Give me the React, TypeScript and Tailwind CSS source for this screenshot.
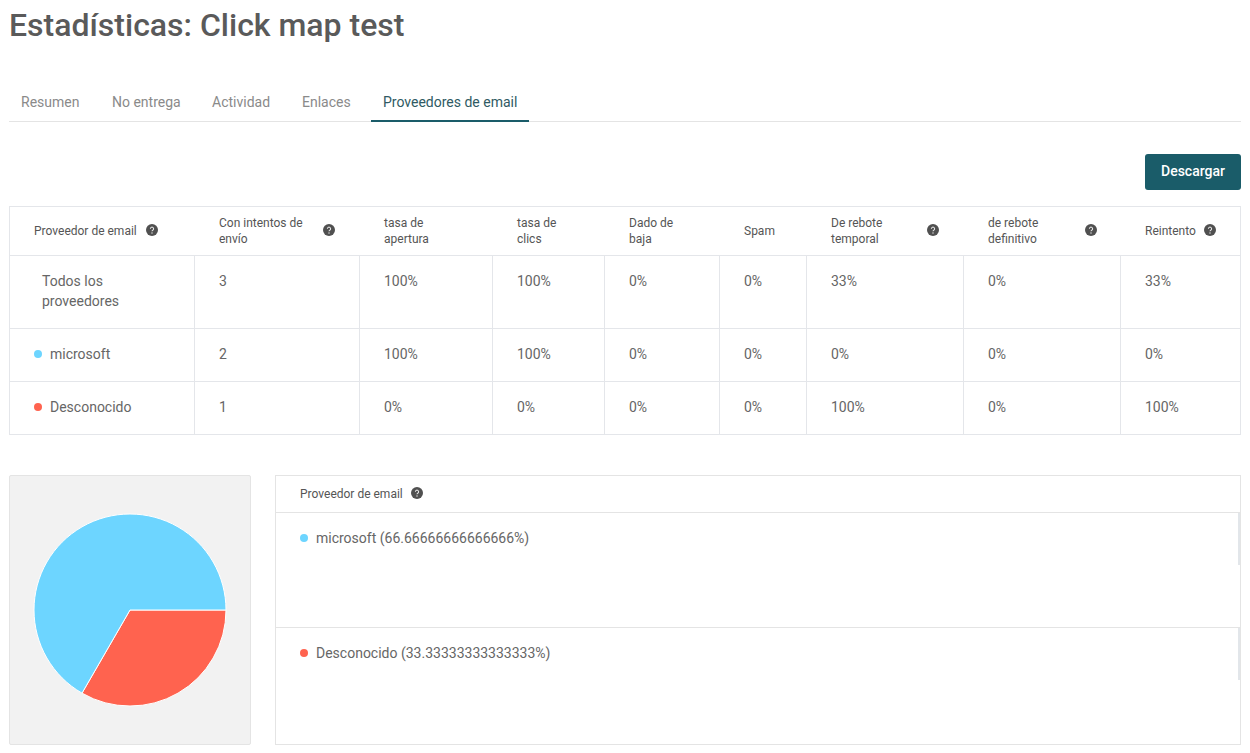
const BLUE = 'bg-[#6dd5ff]'
const RED = 'bg-[#ff634f]'

const TABS = [
  { label: 'Resumen', width: 'w-[91px]' },
  { label: 'No entrega', width: 'w-[100px]' },
  { label: 'Actividad', width: 'w-[90px]' },
  { label: 'Enlaces', width: 'w-[81px]' },
]

const COLUMNS = [
  { label: 'Proveedor de email', width: 'w-[185px]', help: true, textW: 'w-[112px]' },
  { label: 'Con intentos de envío', width: 'w-[165px]', help: true, textW: 'w-[104px]' },
  { label: 'tasa de apertura', width: 'w-[133px]', help: false, textW: 'w-[60px]' },
  { label: 'tasa de clics', width: 'w-[112px]', help: false, textW: 'w-[50px]' },
  { label: 'Dado de baja', width: 'w-[115px]', help: false, textW: 'w-[60px]' },
  { label: 'Spam', width: 'w-[87px]', help: false, textW: 'w-[50px]' },
  { label: 'De rebote temporal', width: 'w-[157px]', help: true, textW: 'w-[96px]' },
  { label: 'de rebote definitivo', width: 'w-[157px]', help: true, textW: 'w-[97px]' },
  { label: 'Reintento', width: 'w-[119px]', help: true, textW: 'w-[59px]' },
]

const ROWS = [
  { name: 'Todos los proveedores', dot: '', height: 'h-[73px]', values: ['3', '100%', '100%', '0%', '0%', '33%', '0%', '33%'] },
  { name: 'microsoft', dot: BLUE, height: 'h-[53px]', values: ['2', '100%', '100%', '0%', '0%', '0%', '0%', '0%'] },
  { name: 'Desconocido', dot: RED, height: 'h-[52px]', values: ['1', '0%', '0%', '0%', '0%', '100%', '0%', '100%'] },
]

const LEGEND = [
  { label: 'microsoft (66.66666666666666%)', dot: BLUE, height: 'h-[115px]' },
  { label: 'Desconocido (33.33333333333333%)', dot: RED, height: 'h-[117px]' },
]

function Help() {
  return (
    <svg viewBox="0 0 12 12" className="w-3 h-3 mb-0.5 shrink-0">
      <circle cx="6" cy="6" r="6" fill="#505050" />
      <path d="M4.4 4.7a1.6 1.6 0 1 1 2.5 1.4c-.6.4-.9.7-.9 1.2" fill="none" stroke="#e8e8e8" strokeWidth="1.1" />
      <circle cx="6" cy="9" r=".7" fill="#e8e8e8" />
    </svg>
  )
}

export default function App() {
  return (
    <div className="w-[1250px] h-[753px] overflow-hidden bg-white px-[9px] font-['Roboto',sans-serif] text-[#666666]">
      <h1 className="pt-[6px] h-[87px] text-[32px] leading-[38px] font-medium text-[#5a5a5a]">Estadísticas: Click map test</h1>

      {/* Tabs */}
      <div className="flex h-[35px] w-[1232px] border-b border-[#e4e4e4] text-sm">
        {TABS.map(t => (
          <div key={t.label} className={`${t.width} pl-3 pt-[5px] text-[#8a8a8a]`}>{t.label}</div>
        ))}
        <div className="w-[158px] h-[35px] border-b-2 border-[#1a5c69] pl-3 pt-[5px] text-[#2f5a63]">Proveedores de email</div>
      </div>

      <div className="flex justify-end w-[1232px] pt-[32px] h-[84px]">
        <button className="w-24 h-9 pb-0.5 rounded-[3px] bg-[#1a5c69] text-sm font-medium text-white">Descargar</button>
      </div>

      {/* Provider table */}
      <div className="w-[1232px] border border-[#e4e6ea]">
        <div className="flex h-[49px] border-b border-[#e4e6ea]">
          {COLUMNS.map(c => (
            <div key={c.label} className={`${c.width} flex items-center pl-6 text-xs leading-4 text-[#555555]`}>
              <span className={c.textW}>{c.label}</span>
              {c.help && <Help />}
            </div>
          ))}
        </div>
        {ROWS.map((r, i) => (
          <div key={r.name} className={`flex ${r.height} ${i < ROWS.length - 1 ? 'border-b border-[#e4e6ea]' : ''} text-sm leading-5`}>
            <div className={`${COLUMNS[0].width} border-r border-[#e4e6ea] pt-[15px] ${r.dot ? 'pl-6' : 'pl-8 pr-10'}`}>
              {r.dot ? (
                <span className="flex items-center gap-2">
                  <span className={`w-2 h-2 rounded-full ${r.dot}`} />
                  {r.name}
                </span>
              ) : r.name}
            </div>
            {r.values.map((v, j) => (
              <div
                key={j}
                className={`${COLUMNS[j + 1].width} pl-6 pt-[15px] ${j < r.values.length - 1 ? 'border-r border-[#e4e6ea]' : ''}`}
              >
                {v}
              </div>
            ))}
          </div>
        ))}
      </div>

      <div className="flex gap-6 w-[1232px] mt-10">
        {/* Pie */}
        <div className="w-[242px] h-[270px] rounded-[2px] border border-[#e4e4e4] bg-[#f2f2f2] flex items-center justify-center">
          <svg width="194" height="194" viewBox="-97 -97 194 194">
            <path d="M0 0 L96 0 A96 96 0 0 1 -48 83.14 Z" fill="#ff634f" stroke="#ffffff" strokeWidth="1" />
            <path d="M0 0 L-48 83.14 A96 96 0 1 1 96 0 Z" fill="#6dd5ff" stroke="#ffffff" strokeWidth="1" />
          </svg>
        </div>

        {/* Legend */}
        <div className="w-[966px] h-[270px] border border-[#e4e4e4]">
          <div className="flex items-center gap-2 h-[37px] pl-6 border-b border-[#e4e4e4] text-xs text-[#555555]">
            Proveedor de email
            <Help />
          </div>
          {LEGEND.map((l, i) => (
            <div key={l.label} className={`relative ${l.height} ${i === 0 ? 'border-b border-[#e4e4e4]' : ''} pl-6 pt-[15px] text-sm leading-5`}>
              <span className="flex items-center gap-2">
                <span className={`w-2 h-2 rounded-full ${l.dot}`} />
                {l.label}
              </span>
              <span className="absolute right-0 top-0 w-0.5 h-[52px] bg-[#e2e6ea]" />
            </div>
          ))}
        </div>
      </div>
    </div>
  )
}
